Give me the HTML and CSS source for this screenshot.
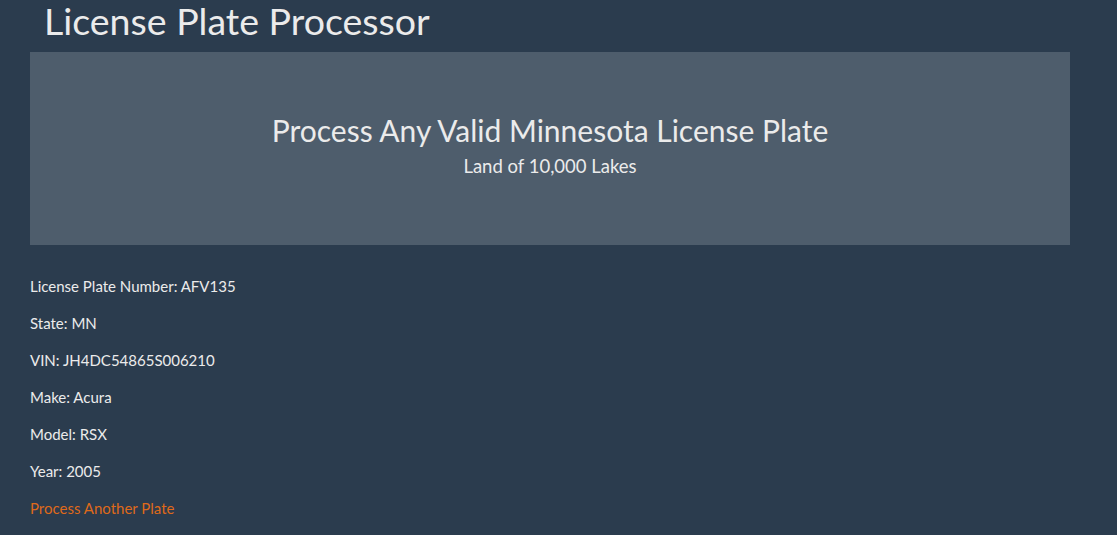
FILE: index.html
```html
<!DOCTYPE html>
<html>
<head>
<meta charset="utf-8">
<link rel="stylesheet" href="styles.css">
</head>
<body>
<div class="page">
  <h1 class="title">License Plate Processor</h1>
  <div class="jumbotron">
    <h2 class="jumbo-heading">Process Any Valid Minnesota License Plate</h2>
    <p class="jumbo-sub">Land of 10,000 Lakes</p>
  </div>
  <div class="details">
    <p class="line">License Plate Number: AFV135</p>
    <p class="line">State: MN</p>
    <p class="line">VIN: JH4DC54865S006210</p>
    <p class="line">Make: Acura</p>
    <p class="line">Model: RSX</p>
    <p class="line">Year: 2005</p>
    <p class="line"><a class="link" href="#">Process Another Plate</a></p>
  </div>
</div>
</body>
</html>
```

FILE: styles.css
```css
html, body {
  margin: 0;
  padding: 0;
  background: #2b3c4e;
}
body {
  font-family: Lato, "Open Sans", sans-serif;
  color: #ebebeb;
  font-size: 15px;
}
.page {
  width: 1040px;
  padding: 0 0 0 30px;
}
.title {
  margin: 0 0 0 14px;
  font-size: 37.5px;
  font-weight: 400;
  line-height: 42px;
  height: 52px;
}
.jumbotron {
  background: #4e5d6c;
  height: 193px;
  display: flex;
  flex-direction: column;
  align-items: center;
  justify-content: center;
  text-align: center;
}
.jumbo-heading {
  margin: 0 0 6px 0;
  font-size: 30px;
  font-weight: 400;
  line-height: 36px;
}
.jumbo-sub {
  margin: 0 0 8px 0;
  font-size: 18.5px;
  line-height: 24px;
}
.details {
  padding-top: 30px;
}
.line {
  margin: 0 0 15px 0;
  line-height: 22px;
}
.link {
  color: #df691a;
  text-decoration: none;
}
```
